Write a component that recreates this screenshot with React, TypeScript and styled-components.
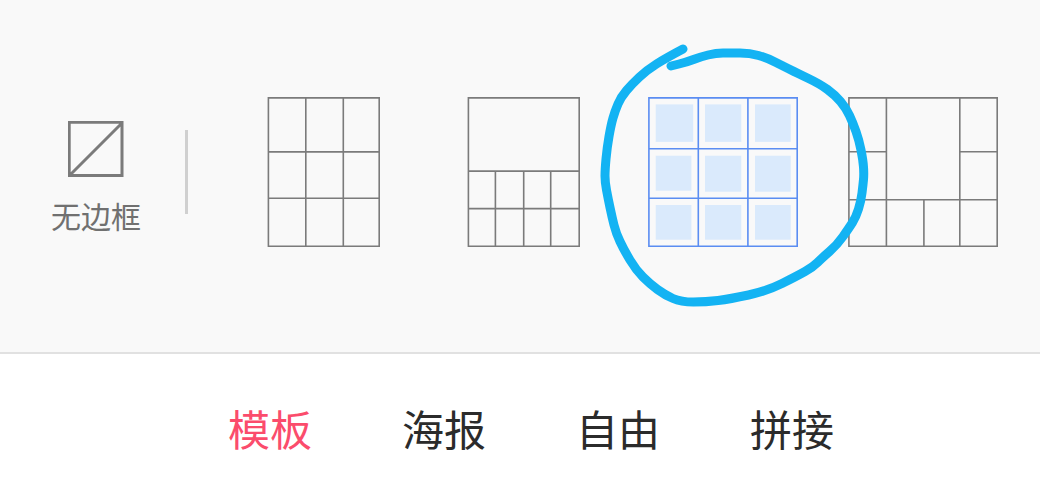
import React, { useState } from 'react';
import styled, { createGlobalStyle } from 'styled-components';

const GlobalStyle = createGlobalStyle`
  *, *::before, *::after { box-sizing: border-box; }
  body {
    margin: 0;
    background: #fff;
    font-family: "Noto Sans CJK SC", sans-serif;
    overflow-x: hidden;
  }
  button {
    margin: 0;
    padding: 0;
    border: 0;
    background: none;
    font: inherit;
    color: inherit;
    cursor: pointer;
  }
  svg { display: block; }
`;

const Picker = styled.section`
  display: flex;
  align-items: center;
  padding: 97px 0 105px 51px;
  background: #f9f9f9;
  border-bottom: 2px solid #e1e1e1;
`;

const BorderToggle = styled.button`
  display: flex;
  flex: none;
  flex-direction: column;
  align-items: center;
  align-self: stretch;
  gap: 23px;
  padding-top: 24px;
  font-size: 30px;
  line-height: 30px;
  color: #707070;
`;

const Divider = styled.div`
  flex: none;
  width: 3px;
  height: 84px;
  margin: 0 35px 0 44px;
  background: #d0d0d0;
`;

const TemplateList = styled.ul`
  display: flex;
  margin: 0;
  padding: 0;
  list-style: none;
`;

const TemplateItem = styled.li`
  position: relative;
  display: flex;
  flex: 0 0 200px;
  justify-content: center;
`;

const TemplateButton = styled.button<{ $selected: boolean }>`
  color: ${({ $selected }) => ($selected ? '#5b8df2' : '#7b7b7b')};
`;

const Scribble = styled.svg`
  position: absolute;
  top: -57px;
  left: -23px;
  z-index: 1;
  pointer-events: none;
`;

const Tabs = styled.nav`
  display: flex;
  justify-content: center;
  gap: 90px;
  padding: 44px 0 44px 22px;
`;

const Tab = styled.button<{ $active: boolean }>`
  font-size: 42px;
  line-height: 60px;
  color: ${({ $active }) => ($active ? '#fb4c6c' : '#2b2b2b')};
`;

interface Template {
  name: string;
  width: number;
  lines: string;
  cells?: number[][];
}

const templates: Template[] = [
  {
    name: '九宫格竖版',
    width: 114,
    lines: 'M2.4 .9H113.2V149.2H2.4ZM39.8 .9V149.2M77.3 .9V149.2M2.4 54.9H113.2M2.4 101.3H113.2',
  },
  {
    name: '上一下八',
    width: 114,
    lines: 'M2.4 .9H113.2V149.2H2.4ZM2.4 74.1H113.2M2.4 111.6H113.2M29.4 74.1V149.2M57.7 74.1V149.2M84.7 74.1V149.2',
  },
  {
    name: '九宫格方版',
    width: 150,
    lines: 'M.9 .9H149.2V149.2H.9ZM50.3 .9V149.2M99.9 .9V149.2M.9 51.7H149.2M.9 101.3H149.2',
    cells: [
      [7.7, 7.4, 37.5, 37.5], [57, 7.4, 36.3, 37.5], [107, 7.4, 35.7, 37.5],
      [7.7, 58.7, 35.7, 35], [57, 58.7, 36.3, 36], [107, 58.7, 35.7, 36],
      [7.7, 108, 35.7, 34.7], [57, 108, 36.3, 34.7], [107, 108, 35.7, 34.7],
    ],
  },
  {
    name: '环绕拼图',
    width: 150,
    lines: 'M.9 .9H149.2V149.2H.9ZM38.4 .9V149.2M111.8 .9V149.2M.9 54.8H38.4M111.8 54.8H149.2M.9 102.7H149.2M75.9 102.7V149.2',
  },
];

const scribblePoints = [
  [683, 49], [666, 58], [647, 70], [632, 84], [621, 97], [615, 111], [611, 125], [607, 148],
  [605, 170], [605, 182], [608, 198], [612, 217], [616, 233], [624, 250], [636, 270], [650, 284],
  [665, 295], [681, 302], [706, 302], [730, 299], [767, 291], [797, 276], [813, 267], [822, 258],
  [837, 245], [849, 228], [856, 217], [861, 201], [863, 185], [864, 174], [863, 160], [859, 140],
  [853, 123], [846, 108], [835, 95], [820, 84], [797, 73], [783, 66], [767, 58], [750, 53],
  [730, 53], [716, 53], [700, 57], [687, 62], [671, 66],
];

// Smooth curve through the midpoints of neighbouring points.
function smoothPath(points: number[][]) {
  const [first, ...rest] = points;
  const last = rest[rest.length - 1];
  const curves = rest.slice(0, -1).map(([x, y], i) => {
    const [nx, ny] = rest[i + 1];
    return `Q${x} ${y} ${(x + nx) / 2} ${(y + ny) / 2}`;
  });
  return `M${first[0]} ${first[1]}${curves.join('')}L${last[0]} ${last[1]}`;
}

const scribblePath = smoothPath(scribblePoints);

const tabs = ['模板', '海报', '自由', '拼接'];

export default function App() {
  const [selected, setSelected] = useState(2);
  const [active, setActive] = useState(0);

  return (
    <main>
      <GlobalStyle />
      <Picker>
        <BorderToggle type="button">
          <svg width="56" height="56" viewBox="0 0 56 56" fill="none" stroke="#7b7b7b" strokeWidth="3" aria-hidden="true">
            <path d="M1.2 1.2H54V54.4H1.2ZM2 54 54 2" />
          </svg>
          无边框
        </BorderToggle>
        <Divider />
        <TemplateList>
          {templates.map((t, i) => (
            <TemplateItem key={t.name}>
              <TemplateButton
                type="button"
                aria-label={t.name}
                aria-pressed={selected === i}
                $selected={selected === i}
                onClick={() => setSelected(i)}
              >
                <svg width={t.width} height="150" viewBox={`0 0 ${t.width} 150`} fill="none" aria-hidden="true">
                  {t.cells?.map(([x, y, w, h]) => (
                    <rect key={`${x}-${y}`} x={x} y={y} width={w} height={h} fill="#daeafc" />
                  ))}
                  <path d={t.lines} stroke="currentColor" strokeWidth="1.6" />
                </svg>
              </TemplateButton>
              {i === 2 && (
                <Scribble width="270" height="270" viewBox="600 40 270 270" fill="none" aria-hidden="true">
                  <path d={scribblePath} stroke="#13b3f3" strokeWidth="9" strokeLinecap="round" strokeLinejoin="round" />
                </Scribble>
              )}
            </TemplateItem>
          ))}
        </TemplateList>
      </Picker>
      <Tabs>
        {tabs.map((label, i) => (
          <Tab key={label} type="button" $active={active === i} onClick={() => setActive(i)}>
            {label}
          </Tab>
        ))}
      </Tabs>
    </main>
  );
}
